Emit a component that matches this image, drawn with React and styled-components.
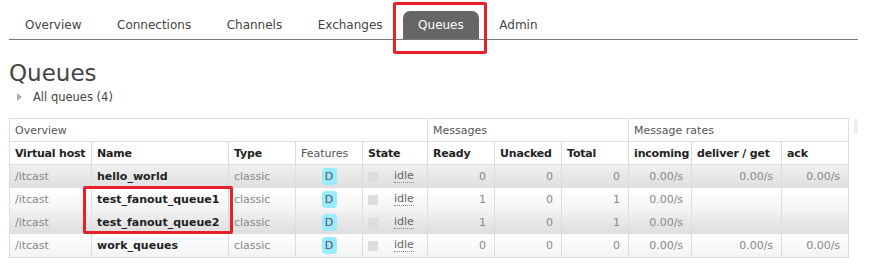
import React from 'react';
import styled, { createGlobalStyle } from 'styled-components';

const Global = createGlobalStyle`
  html, body { margin: 0; padding: 0; background: #fff; }
  body { font-family: "DejaVu Sans", Verdana, sans-serif; color: #444; }
`;

const Page = styled.div`
  position: relative;
  width: 872px;
  height: 275px;
  padding: 0 14px 0 9px;
  box-sizing: border-box;
`;

const Nav = styled.ul`
  display: flex;
  align-items: flex-end;
  list-style: none;
  margin: 0;
  padding: 10px 0 0 1px;
  height: 29px;
  border-bottom: 1px solid #777;
  box-sizing: content-box;
`;

const NavItem = styled.li`
  height: 28px;
  line-height: 28px;
  padding: 0 15px;
  margin-right: 5.5px;
  font-size: 12px;
  color: ${p => (p.$active ? '#fff' : '#444')};
  background: ${p => (p.$active ? '#666' : 'transparent')};
  border-radius: 7px 7px 0 0;
`;

const Heading = styled.h1`
  margin: 20px 0 0;
  font-size: 23px;
  font-weight: normal;
  line-height: 26px;
  color: #444;
`;

const Toggle = styled.div`
  display: flex;
  align-items: center;
  margin: 4px 0 0 8px;
  height: 14px;
  font-size: 11.5px;
  color: #444;
  &::before {
    content: '';
    width: 0;
    height: 0;
    border-top: 4.5px solid transparent;
    border-bottom: 4.5px solid transparent;
    border-left: 5px solid #aaa;
    margin-right: 11px;
  }
`;

const TableWrap = styled.div`
  display: flex;
  align-items: flex-start;
  margin-top: 14px;
`;

const Table = styled.table`
  border-collapse: collapse;
  width: 840px;
  table-layout: fixed;
  border: 1px solid #ddd;
  font-size: 11px;
`;

const Scroll = styled.div`
  width: 7px;
  height: 15px;
  margin: 1px 0 0 5px;
  background: #eee;
`;

const GroupTh = styled.th`
  height: 22px;
  padding: 0 5px;
  text-align: left;
  font-weight: normal;
  color: #555;
  border: 1px solid #ddd;
  border-top: none;
`;

const Th = styled.th`
  height: 22px;
  padding: 0 5px;
  text-align: left;
  white-space: nowrap;
  font-weight: ${p => (p.$light ? 'normal' : 'bold')};
  color: ${p => (p.$light ? '#555' : '#222')};
  letter-spacing: ${p => (p.$light ? 0 : -0.2)}px;
  border: 1px solid #ddd;
`;

const Row = styled.tr`
  background: ${p =>
    p.$alt
      ? 'linear-gradient(#ffffff, #f3f3f3)'
      : 'linear-gradient(#f0f0f0, #dedede)'};
`;

const Td = styled.td`
  height: 23px;
  padding: 0 ${p => (p.$right ? 8 : 5)}px 0 5px;
  border-left: 1px solid #ddd;
  border-right: 1px solid #ddd;
  color: ${p => (p.$strong ? '#222' : '#888')};
  font-weight: ${p => (p.$strong ? 'bold' : 'normal')};
  text-align: ${p => (p.$right ? 'right' : p.$center ? 'center' : 'left')};
  white-space: nowrap;
  overflow: hidden;
`;

const Badge = styled.span`
  display: inline-block;
  width: 15px;
  height: 17px;
  line-height: 17px;
  border-radius: 4px;
  background: #99ebff;
  color: #555;
  font-size: 11px;
  text-align: center;
`;

const State = styled.div`
  display: flex;
  align-items: center;
  gap: 16px;
`;

const Square = styled.span`
  width: 10px;
  height: 10px;
  background: #ddd;
`;

const Idle = styled.span`
  color: #666;
  border-bottom: 1px dotted #888;
  line-height: 12px;
`;

const Mark = styled.div`
  position: absolute;
  border: 3px solid #e8202a;
  border-radius: 2px;
  box-sizing: border-box;
`;

const rows = [
  { name: 'hello_world', ready: 0, unacked: 0, total: 0, rates: ['0.00/s', '0.00/s', '0.00/s'] },
  { name: 'test_fanout_queue1', ready: 1, unacked: 0, total: 1, rates: ['0.00/s', '', ''] },
  { name: 'test_fanout_queue2', ready: 1, unacked: 0, total: 1, rates: ['0.00/s', '', ''] },
  { name: 'work_queues', ready: 0, unacked: 0, total: 0, rates: ['0.00/s', '0.00/s', '0.00/s'] },
];

const widths = [82, 137, 67, 67, 65, 67, 67, 67, 63, 90, 67];

export default function App() {
  return (
    <>
      <Global />
      <Page>
        <Nav>
          <NavItem>Overview</NavItem>
          <NavItem>Connections</NavItem>
          <NavItem>Channels</NavItem>
          <NavItem>Exchanges</NavItem>
          <NavItem $active>Queues</NavItem>
          <NavItem>Admin</NavItem>
        </Nav>
        <Heading>Queues</Heading>
        <Toggle>All queues (4)</Toggle>
        <TableWrap>
          <Table>
            <colgroup>
              {widths.map((w, i) => <col key={i} style={{ width: w }} />)}
            </colgroup>
            <thead>
              <tr>
                <GroupTh colSpan={5}>Overview</GroupTh>
                <GroupTh colSpan={3}>Messages</GroupTh>
                <GroupTh colSpan={3}>Message rates</GroupTh>
              </tr>
              <tr>
                <Th>Virtual host</Th>
                <Th>Name</Th>
                <Th>Type</Th>
                <Th $light>Features</Th>
                <Th>State</Th>
                <Th>Ready</Th>
                <Th>Unacked</Th>
                <Th>Total</Th>
                <Th>incoming</Th>
                <Th>deliver / get</Th>
                <Th>ack</Th>
              </tr>
            </thead>
            <tbody>
              {rows.map((r, i) => (
                <Row key={r.name} $alt={i % 2 === 1}>
                  <Td>/itcast</Td>
                  <Td $strong>{r.name}</Td>
                  <Td>classic</Td>
                  <Td $center><Badge>D</Badge></Td>
                  <Td>
                    <State><Square /><Idle>idle</Idle></State>
                  </Td>
                  <Td $right>{r.ready}</Td>
                  <Td $right>{r.unacked}</Td>
                  <Td $right>{r.total}</Td>
                  {r.rates.map((v, j) => <Td key={j} $right>{v}</Td>)}
                </Row>
              ))}
            </tbody>
          </Table>
          <Scroll />
        </TableWrap>
        <Mark style={{ left: 393, top: 2, width: 94, height: 52 }} />
        <Mark style={{ left: 83, top: 186, width: 150, height: 48 }} />
      </Page>
    </>
  );
}
